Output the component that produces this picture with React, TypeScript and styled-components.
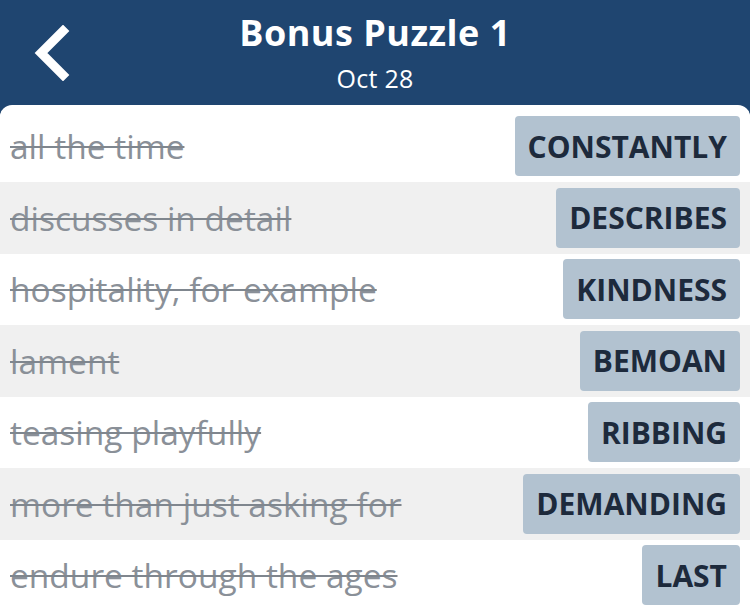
import styled, { createGlobalStyle } from "styled-components";

const GlobalStyle = createGlobalStyle`
html,
body {
  margin: 0;
  padding: 0;
  background: #1f4570;
  font-family: "Open Sans", Lato, sans-serif;
}
`;

const Page = styled.div`
  width: 750px;
  height: 611px;
  display: flex;
  flex-direction: column;
  background: #1f4570;
  overflow: hidden;
`;

const Header = styled.header`
  height: 105px;
  flex-shrink: 0;
  display: grid;
  grid-template-columns: 100px 1fr 100px;
  color: #ffffff;
`;

const BackButton = styled.div`
  display: flex;
  align-items: center;
  padding-left: 32px;
`;

const TitleBlock = styled.div`
  display: flex;
  flex-direction: column;
  align-items: center;
  padding-top: 11px;
`;

const Title = styled.h1`
  margin: 0;
  font-size: 36px;
  font-weight: 700;
  line-height: 44px;
  letter-spacing: 0.5px;
`;

const Subtitle = styled.div`
  font-size: 25px;
  line-height: 26px;
  margin-top: 10px;
  letter-spacing: 0.3px;
`;

const List = styled.div`
  flex: 1;
  background: #ffffff;
  border-radius: 12px 12px 0 0;
  overflow: hidden;
  padding-top: 5.5px;
  display: flex;
  flex-direction: column;
`;

const Row = styled.div<{ shaded?: boolean }>`
  height: 71.5px;
  flex-shrink: 0;
  display: flex;
  align-items: center;
  justify-content: space-between;
  padding: 0 10px;
  background: ${({ shaded }) => (shaded ? "#f0f0f0" : "#ffffff")};
`;

const Clue = styled.span`
  font-size: 33.5px;
  color: #8a9098;
  text-decoration: line-through;
  text-decoration-thickness: 2px;
  text-decoration-color: #7f868e;
`;

const Answer = styled.span`
  height: 60px;
  display: flex;
  align-items: center;
  padding: 0 13px;
  background: #b2c2d0;
  border-radius: 4px;
  color: #1d2a3c;
  font-size: 30px;
  font-weight: 700;
`;

const rows = [
  ["all the time", "CONSTANTLY"],
  ["discusses in detail", "DESCRIBES"],
  ["hospitality, for example", "KINDNESS"],
  ["lament", "BEMOAN"],
  ["teasing playfully", "RIBBING"],
  ["more than just asking for", "DEMANDING"],
  ["endure through the ages", "LAST"],
];

export default function App() {
  return (
    <Page>
      <GlobalStyle />
      <Header>
        <BackButton>
          <svg width="40" height="56" viewBox="0 0 40 56">
            <path
              d="M31 6 L9 28 L31 50"
              fill="none"
              stroke="#ffffff"
              strokeWidth="9"
              strokeLinecap="square"
            />
          </svg>
        </BackButton>
        <TitleBlock>
          <Title>Bonus Puzzle 1</Title>
          <Subtitle>Oct 28</Subtitle>
        </TitleBlock>
        <div />
      </Header>
      <List>
        {rows.map(([clue, answer], i) => (
          <Row key={answer} shaded={i % 2 === 1}>
            <Clue>{clue}</Clue>
            <Answer>{answer}</Answer>
          </Row>
        ))}
      </List>
    </Page>
  );
}
